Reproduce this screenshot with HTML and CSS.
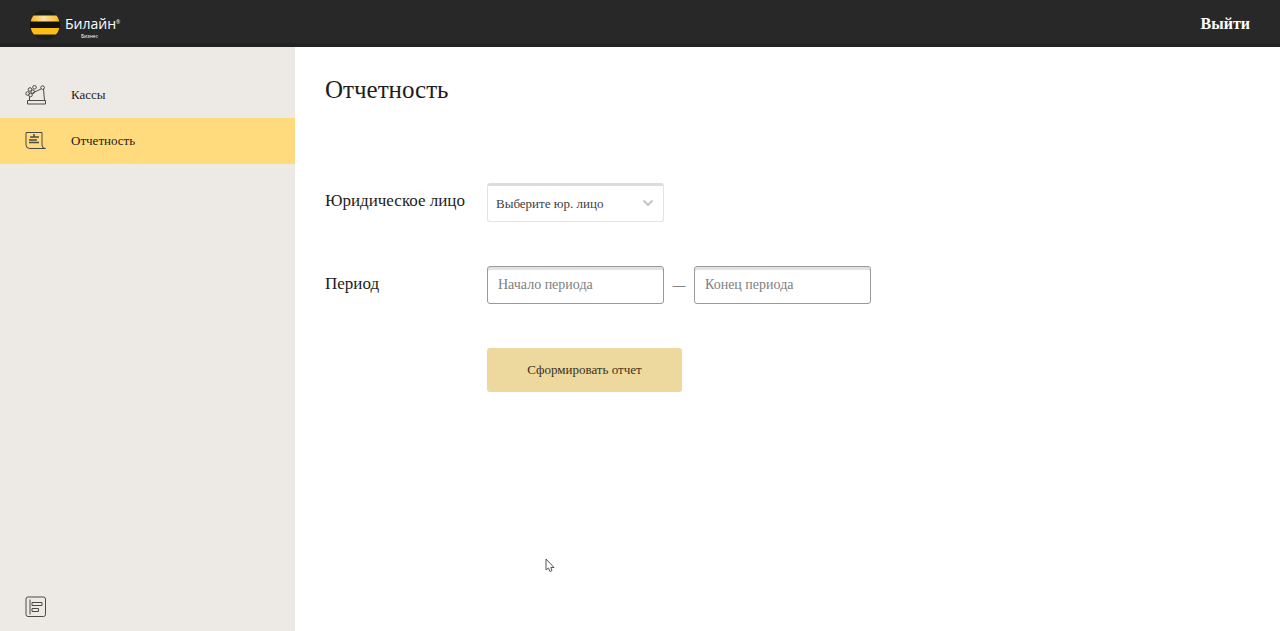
FILE: index.html
```html
<!DOCTYPE html>
<html lang="ru">
<head>
<meta charset="utf-8">
<title>Отчетность</title>
<link rel="stylesheet" href="styles.css">
</head>
<body class="page">
<header class="header">
  <a class="logo" href="#">
    <svg class="logo-mark" viewBox="0 0 30 30" aria-hidden="true">
      <defs>
        <clipPath id="ball"><circle cx="15" cy="15" r="15"/></clipPath>
        <linearGradient id="gold" x1="0" x2="1" y1="0" y2="0">
          <stop offset="0" stop-color="#f9b51e"/>
          <stop offset=".45" stop-color="#ffe29a"/>
          <stop offset="1" stop-color="#f8ba20"/>
        </linearGradient>
      </defs>
      <g clip-path="url(#ball)">
        <rect width="30" height="30" fill="#1f1d1a"/>
        <rect y="11" width="30" height="7" fill="#14110c"/>
      </g>
      <path d="M3.500 5.500H26.500Q28.500 7.500 29.300 11.500H.7Q1.500 7.500 3.500 5.500Z" fill="url(#gold)"/>
      <path d="M.7 18H29.300Q28.500 22 26 24.500H4Q1.500 22 .7 18Z" fill="#f9bd14"/>
    </svg>
    <span class="logo-text">
      <span class="logo-name">Билайн<sup class="logo-reg">®</sup></span>
      <span class="logo-sub">Бизнес</span>
    </span>
  </a>
  <a class="logout" href="#">Выйти</a>
</header>
<div class="body">
  <aside class="sidebar">
    <nav class="nav">
      <a class="nav-item" href="#">
        <svg class="icon" viewBox="0 0 22 22" aria-hidden="true">
          <path d="M2.500 16.500H20.500V20H2.500ZM4.500 16.500V12.500M7.500 9L16 5M18.500 5L19.500 16.500"/>
          <circle cx="2.600" cy="9.500" r="1.800"/><circle cx="5.500" cy="11" r="1.800"/>
          <circle cx="5" cy="5.500" r="1.800"/><circle cx="7.700" cy="7.800" r="1.800"/>
          <circle cx="9.500" cy="3.300" r="1.800"/><circle cx="17.600" cy="3.600" r="1.800"/>
        </svg>
        <span>Кассы</span>
      </a>
      <a class="nav-item nav-item-active" href="#" aria-current="page">
        <svg class="icon" viewBox="0 0 22 22" aria-hidden="true">
          <path d="M1 2.500H17V15Q17 18.500 20.500 18.500H5Q1 18.500 1 15Z"/>
          <path d="M9 4V7M5 7H14M4 10H12M4 12.500H14" stroke-width="1.500"/>
        </svg>
        <span>Отчетность</span>
      </a>
    </nav>
    <button class="collapse" type="button" aria-label="Свернуть меню">
      <svg class="icon" viewBox="0 0 22 22" aria-hidden="true">
        <rect x="1" y="1" width="19.500" height="19.500" rx="2"/>
        <path d="M5 3.500V18.500M7 6.500H17V9.500H7ZM7 12.500H13.500V15.500H7Z"/>
      </svg>
    </button>
  </aside>
  <main class="content">
    <h1 class="title">Отчетность</h1>
    <form class="form">
      <label class="label" for="entity">Юридическое лицо</label>
      <div class="select-wrap">
        <select class="field select" id="entity"><option>Выберите юр. лицо</option></select>
        <svg class="chevron" viewBox="0 0 12 8" aria-hidden="true"><path d="M1.500 1.500L6 6L10.500 1.500"/></svg>
      </div>
      <label class="label" for="start">Период</label>
      <div class="period">
        <input class="field input" id="start" type="text" placeholder="Начало периода">
        <span class="dash">—</span>
        <input class="field input" type="text" placeholder="Конец периода" aria-label="Конец периода">
      </div>
      <button class="submit" type="button">Сформировать отчет</button>
    </form>
  </main>
</div>
<svg class="cursor" viewBox="0 0 10 15" aria-hidden="true"><path d="M1 1V12L3.500 10L5 13.500L7 12.500L5.800 9.500H9Z"/></svg>
</body>
</html>
```
FILE: styles.css
```css
* { box-sizing: border-box; }

.page {
  margin: 0;
  min-height: 100vh;
  display: flex;
  flex-direction: column;
  background: #fff;
  color: #1d1d1d;
  font-family: "Liberation Serif", serif;
  font-size: 13px;
}

.header {
  display: flex;
  align-items: center;
  justify-content: space-between;
  height: 47px;
  padding: 0 30px;
  background: #282828;
  border-bottom: 4px solid #222;
}

.logo {
  display: flex;
  align-items: center;
  gap: 5px;
  padding-top: 6px;
  color: #fff;
  text-decoration: none;
  font-family: "Open Sans", sans-serif;
}
.logo-mark { width: 30px; height: 30px; }
.logo-text { display: flex; flex-direction: column; padding-top: 7px; }
.logo-name { font-size: 14px; font-weight: normal; line-height: 16px; }
.logo-reg { font-size: 5px; line-height: 5px; vertical-align: 5px; }
.logo-sub { padding-left: 16px; font-size: 5px; line-height: 8px; }

.logout {
  color: #fff;
  font-size: 16px;
  font-weight: bold;
  line-height: 24px;
  padding-top: 4px;
  text-decoration: none;
}

.body { flex: 1; display: flex; }

.sidebar {
  flex: 0 0 295px;
  display: flex;
  flex-direction: column;
  justify-content: space-between;
  padding: 25px 0 13px;
  background: #edeae6;
}
.nav-item {
  display: flex;
  align-items: center;
  gap: 24px;
  height: 46px;
  padding-left: 25px;
  color: #1d1d1d;
  text-decoration: none;
}
.nav-item-active { background: #ffdb7d; }
.icon {
  display: block;
  width: 22px;
  height: 22px;
  fill: none;
  stroke: #4c4a46;
  stroke-width: 1;
}
.collapse {
  align-self: flex-start;
  margin-left: 25px;
  padding: 0;
  border: 0;
  background: none;
}

.content { flex: 1; padding: 27px 30px; }
.title {
  margin: 0 0 77px;
  font-size: 25px;
  font-weight: normal;
  line-height: 32px;
}

.form {
  display: grid;
  grid-template-columns: 142px auto;
  column-gap: 20px;
  row-gap: 44px;
  justify-content: start;
}
.label { padding-top: 6px; font-size: 17px; line-height: 24px; white-space: nowrap; }
.field {
  width: 177px;
  border-radius: 3px;
  background: #fff;
  font-family: inherit;
}
.select-wrap { position: relative; width: 177px; height: 39px; }
.select {
  height: 100%;
  padding: 0 28px 0 8px;
  border: 1px solid #e3e3e3;
  border-top: 3px solid #dcdcdc;
  appearance: none;
  color: #404040;
  font-size: 13px;
}
.chevron {
  position: absolute;
  right: 10px;
  top: 16px;
  width: 12px;
  height: 8px;
  fill: none;
  stroke: #c4c4c4;
  stroke-width: 2;
  pointer-events: none;
}
.period { display: flex; align-items: center; }
.input {
  height: 38px;
  padding: 0 10px;
  border: 1px solid #999;
  box-shadow: inset 0 3px 0 #e2e2e2;
  font-size: 14px;
}
.input::placeholder { color: #808080; opacity: 1; }
.dash { width: 30px; text-align: center; font-size: 13px; }
.submit {
  grid-column: 2;
  justify-self: start;
  width: 195px;
  height: 44px;
  border: 0;
  border-radius: 3px;
  background: #edd99d;
  color: #38301e;
  font-family: inherit;
  font-size: 13px;
}

.cursor {
  position: absolute;
  left: 545px;
  top: 558px;
  width: 10px;
  height: 15px;
  fill: #fff;
  stroke: #555;
  pointer-events: none;
}
```
